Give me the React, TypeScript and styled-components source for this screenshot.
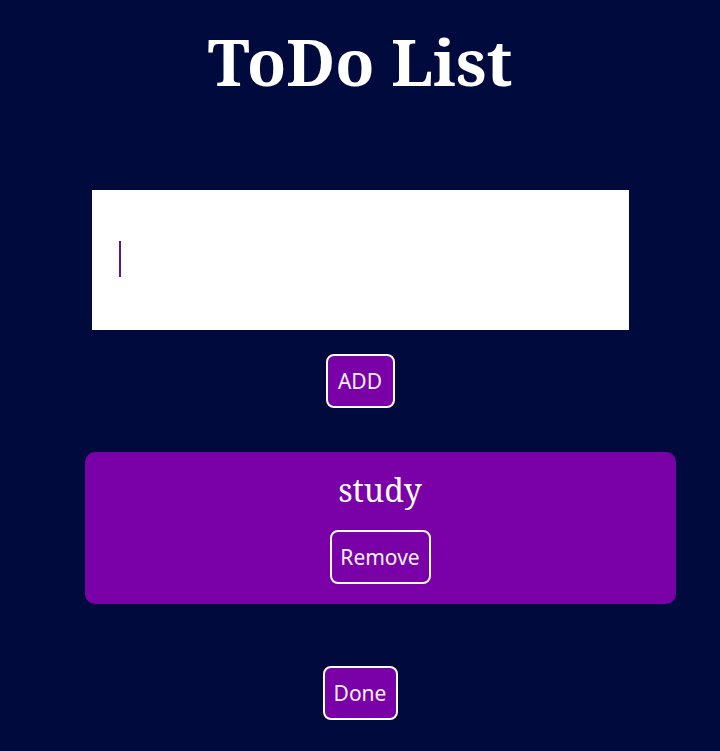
import React, { useState } from "react";
import styled, { createGlobalStyle } from "styled-components";

const Global = createGlobalStyle`
  html, body { margin: 0; padding: 0; background: #000a3c; }
  body { font-family: "Noto Serif", "DejaVu Serif", serif; }
`;

const Page = styled.div`
  width: 720px;
  min-height: 751px;
  background: #000a3c;
  display: flex;
  flex-direction: column;
  align-items: center;
  color: #fff;
`;

const Title = styled.h1`
  margin: 24px 0 0;
  font-family: "Noto Serif", "DejaVu Serif", serif;
  font-weight: 700;
  font-size: 64px;
  line-height: 76px;
  color: #fff;
`;

const InputWrap = styled.div`
  position: relative;
  margin-top: 90px;
  width: 537px;
  height: 140px;
`;

const Input = styled.input`
  width: 100%;
  height: 100%;
  box-sizing: border-box;
  border: none;
  outline: none;
  padding: 0 27px;
  font-size: 30px;
  font-family: "Noto Serif", "DejaVu Serif", serif;
  background: #fff;
  caret-color: transparent;
  display: block;
`;

const Caret = styled.span`
  position: absolute;
  left: 27px;
  top: 51px;
  width: 2px;
  height: 36px;
  background: #5e1590;
  pointer-events: none;
`;

const Button = styled.button<{ $w: number }>`
  font-family: "Noto Sans", sans-serif;
  font-size: 21px;
  color: #fbf2ff;
  background: #7a00a8;
  border: 2px solid #fff;
  border-radius: 8px;
  width: ${(p) => p.$w}px;
  height: 54px;
  padding: 0;
  display: flex;
  align-items: center;
  justify-content: center;
  cursor: pointer;
`;

const AddButton = styled(Button)`
  margin-top: 24px;
`;

const Card = styled.div`
  margin-top: 44px;
  margin-left: 40px;
  width: 591px;
  height: 152px;
  box-sizing: border-box;
  background: #7a00a8;
  border-radius: 10px;
  display: flex;
  flex-direction: column;
  align-items: center;
  padding-top: 18px;
`;

const ItemText = styled.div`
  font-family: "Noto Serif", "DejaVu Serif", serif;
  font-size: 32px;
  line-height: 40px;
  color: #fff;
  margin-bottom: 20px;
`;

const DoneButton = styled(Button)`
  margin-top: 62px;
`;

export default function App() {
  const [value, setValue] = useState("");
  return (
    <Page>
      <Global />
      <Title>ToDo List</Title>
      <InputWrap>
        <Input value={value} onChange={(e) => setValue(e.target.value)} />
        {value === "" && <Caret />}
      </InputWrap>
      <AddButton $w={69}>ADD</AddButton>
      <Card>
        <ItemText>study</ItemText>
        <Button $w={101}>Remove</Button>
      </Card>
      <DoneButton $w={75}>Done</DoneButton>
    </Page>
  );
}
